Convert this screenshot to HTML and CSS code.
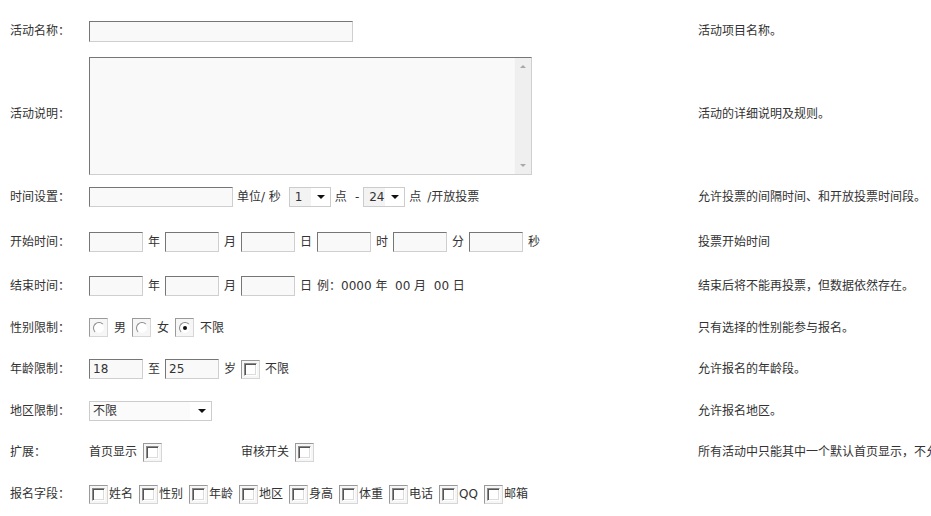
FILE: index.html
```html
<!DOCTYPE html>
<html lang="zh-CN">
<head>
<meta charset="utf-8">
<title>活动设置</title>
<link rel="stylesheet" href="styles.css">
</head>
<body>
<div class="form">
  <div class="row r1">
    <div class="label">活动名称：</div>
    <div class="field"><input class="txt w-name" type="text"></div>
    <div class="desc">活动项目名称。</div>
  </div>
  <div class="row r2">
    <div class="label">活动说明：</div>
    <div class="field">
      <div class="area">
        <textarea class="area-text"></textarea>
        <div class="scroll"><span class="arr up"></span><span class="arr down"></span></div>
      </div>
    </div>
    <div class="desc">活动的详细说明及规则。</div>
  </div>
  <div class="row r3">
    <div class="label">时间设置：</div>
    <div class="field">
      <input class="txt w-interval" type="text">
      <span>单位/ 秒</span>
      <span class="sel sel-small sp"><span class="sel-val">1</span><span class="caret"></span></span>
      <span>点</span>
      <span class="sp">-</span>
      <span class="sel sel-small"><span class="sel-val">24</span><span class="caret"></span></span>
      <span>点</span>
      <span class="sp-s">/开放投票</span>
    </div>
    <div class="desc">允许投票的间隔时间、和开放投票时间段。</div>
  </div>
  <div class="row r4">
    <div class="label">开始时间：</div>
    <div class="field g5">
      <input class="txt w-date" type="text"><span>年</span>
      <input class="txt w-date" type="text"><span>月</span>
      <input class="txt w-date" type="text"><span>日</span>
      <input class="txt w-date" type="text"><span>时</span>
      <input class="txt w-date" type="text"><span>分</span>
      <input class="txt w-date" type="text"><span>秒</span>
    </div>
    <div class="desc">投票开始时间</div>
  </div>
  <div class="row r5">
    <div class="label">结束时间：</div>
    <div class="field g5">
      <input class="txt w-date" type="text"><span>年</span>
      <input class="txt w-date" type="text"><span>月</span>
      <input class="txt w-date" type="text"><span>日</span>
      <span>例：0000 年&nbsp; 00 月&nbsp; 00 日</span>
    </div>
    <div class="desc">结束后将不能再投票，但数据依然存在。</div>
  </div>
  <div class="row r6">
    <div class="label">性别限制：</div>
    <div class="field g6">
      <span class="box"><span class="radio"></span></span><span>男</span>
      <span class="box"><span class="radio"></span></span><span>女</span>
      <span class="box"><span class="radio on"></span></span><span>不限</span>
    </div>
    <div class="desc">只有选择的性别能参与报名。</div>
  </div>
  <div class="row r7">
    <div class="label">年龄限制：</div>
    <div class="field g5">
      <input class="txt w-date" type="text" value="18"><span>至</span>
      <input class="txt w-date" type="text" value="25"><span>岁</span>
      <span class="box"><span class="check"></span></span><span>不限</span>
    </div>
    <div class="desc">允许报名的年龄段。</div>
  </div>
  <div class="row r8">
    <div class="label">地区限制：</div>
    <div class="field">
      <span class="sel sel-wide"><span class="sel-val">不限</span><span class="caret"></span></span>
    </div>
    <div class="desc">允许报名地区。</div>
  </div>
  <div class="row r9">
    <div class="label">扩展：</div>
    <div class="field g6">
      <span>首页显示</span><span class="box"><span class="check"></span></span>
      <span class="ext-gap">审核开关</span><span class="box"><span class="check"></span></span>
    </div>
    <div class="desc">所有活动中只能其中一个默认首页显示，不允许多个活动同时默认首页显示。</div>
  </div>
  <div class="row r10">
    <div class="label">报名字段：</div>
    <div class="field fields">
      <span class="opt"><span class="box"><span class="check"></span></span><span>姓名</span></span>
      <span class="opt"><span class="box"><span class="check"></span></span><span>性别</span></span>
      <span class="opt"><span class="box"><span class="check"></span></span><span>年龄</span></span>
      <span class="opt"><span class="box"><span class="check"></span></span><span>地区</span></span>
      <span class="opt"><span class="box"><span class="check"></span></span><span>身高</span></span>
      <span class="opt"><span class="box"><span class="check"></span></span><span>体重</span></span>
      <span class="opt"><span class="box"><span class="check"></span></span><span>电话</span></span>
      <span class="opt"><span class="box"><span class="check"></span></span><span>QQ</span></span>
      <span class="opt"><span class="box"><span class="check"></span></span><span>邮箱</span></span>
    </div>
    <div class="desc"></div>
  </div>
</div>
</body>
</html>
```
FILE: styles.css
```css
html, body {
  margin: 0;
  padding: 0;
  background: #ffffff;
  overflow: hidden;
}
body {
  font-family: "DejaVu Sans", "Noto Sans CJK SC", sans-serif;
  font-size: 12px;
  color: #333333;
  line-height: 14px;
}
.form {
  padding: 10px 0 0 10px;
}
.row {
  display: grid;
  grid-template-columns: 79px 609px auto;
  align-items: center;
}
.r1 { height: 42px; }
.r2 { height: 123px; }
.r3 { height: 44px; }
.r4 { height: 45px; }
.r5 { height: 43px; }
.r6 { height: 41px; }
.r7 { height: 42px; }
.r8 { height: 41px; }
.r9 { height: 42px; }
.r10 { height: 42px; }

.label, .desc {
  white-space: nowrap;
}
.field {
  display: flex;
  align-items: center;
  gap: 4px;
  white-space: nowrap;
}
.g5 { gap: 5px; }
.g6 { gap: 6px; }

.txt {
  box-sizing: border-box;
  height: 20px;
  margin: 0;
  padding: 0 3px;
  border: 1px solid;
  border-color: #767676 #cfcfcf #cfcfcf #767676;
  background: #f9f9f9;
  font-family: "DejaVu Sans", "Noto Sans CJK SC", sans-serif;
  font-size: 12px;
  color: #333333;
  outline: none;
}
.w-name { width: 264px; height: 21px; }
.w-interval { width: 144px; }
.w-date { width: 54px; }

.area {
  box-sizing: border-box;
  width: 443px;
  height: 118px;
  display: flex;
  border: 1px solid;
  border-color: #767676 #cfcfcf #cfcfcf #767676;
  background: #f9f9f9;
  margin-top: 4px;
}
.area-text {
  flex: 1;
  border: none;
  background: transparent;
  resize: none;
  outline: none;
  margin: 0;
  padding: 2px;
}
.scroll {
  width: 16px;
  background: #efefef;
  border-left: 1px solid #f7f7f7;
  display: flex;
  flex-direction: column;
  justify-content: space-between;
  align-items: center;
  padding: 7px 0 7px;
}
.arr {
  width: 0;
  height: 0;
  border-left: 3px solid transparent;
  border-right: 3px solid transparent;
}
.arr.up { border-bottom: 3px solid #a8a8a8; }
.arr.down { border-top: 3px solid #a8a8a8; }

.sel {
  box-sizing: border-box;
  display: flex;
  align-items: center;
  height: 20px;
  border: 1px solid #cccccc;
  background: #ffffff;
}
.sel-val {
  align-self: stretch;
  display: flex;
  align-items: center;
  background: #f3f3f3;
  padding-left: 5px;
  color: #333333;
}
.sel-small { width: 42px; }
.sel-small .sel-val { width: 16px; }
.sel-wide { width: 123px; }
.sel-wide .sel-val { width: 97px; padding-left: 3px; background: #fbfbfb; }
.caret {
  width: 0;
  height: 0;
  margin-left: auto;
  margin-right: 5px;
  border-left: 4px solid transparent;
  border-right: 4px solid transparent;
  border-top: 4px solid #111111;
}
.sp { margin-left: 4px; }
.sp-s { margin-left: 2px; }

.box {
  box-sizing: border-box;
  width: 19px;
  height: 19px;
  display: inline-flex;
  align-items: center;
  justify-content: center;
  border: 1px solid;
  border-color: #9a9a9a #d6d6d6 #d6d6d6 #9a9a9a;
  background: #f6f6f6;
  flex: none;
}
.radio {
  box-sizing: border-box;
  width: 12px;
  height: 12px;
  border-radius: 50%;
  border: 1px solid;
  border-color: #8a8a8a #f4f4f4 #f4f4f4 #8a8a8a;
  background: #ffffff;
  display: flex;
  align-items: center;
  justify-content: center;
}
.radio.on::after {
  content: "";
  width: 4px;
  height: 4px;
  border-radius: 50%;
  background: #111111;
}
.check {
  box-sizing: border-box;
  width: 13px;
  height: 13px;
  border: 1px solid;
  border-color: #8a8a8a #ffffff #ffffff #8a8a8a;
  box-shadow: inset 1px 1px 0 #555555, inset -1px -1px 0 #dcdcdc;
  background: #ffffff;
}
.ext-gap { margin-left: 73px; }

.fields { gap: 6px; }
.opt {
  display: inline-flex;
  align-items: center;
  gap: 1px;
}
```
